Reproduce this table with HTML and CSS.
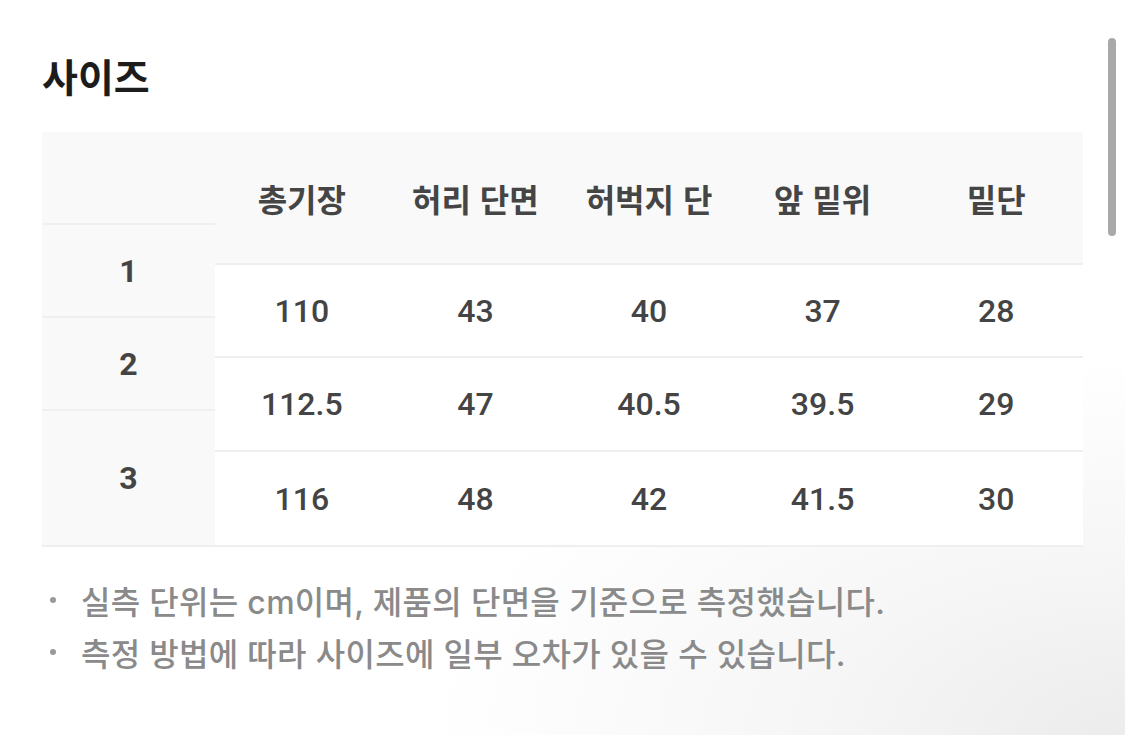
FILE: index.html
```html
<!DOCTYPE html>
<html lang="ko">
<head>
<meta charset="utf-8">
<title>사이즈</title>
<link rel="stylesheet" href="styles.css">
</head>
<body>
<div class="page">
  <h2 class="title">사이즈</h2>
  <div class="size-table">
    <div class="side">
      <div class="side-head"></div>
      <div class="side-cell">1</div>
      <div class="side-cell">2</div>
      <div class="side-cell side-last">3</div>
    </div>
    <div class="main">
      <div class="row row-head">
        <div class="cell">총기장</div>
        <div class="cell">허리 단면</div>
        <div class="cell">허벅지 단</div>
        <div class="cell">앞 밑위</div>
        <div class="cell">밑단</div>
      </div>
      <div class="row row-a">
        <div class="cell">110</div>
        <div class="cell">43</div>
        <div class="cell">40</div>
        <div class="cell">37</div>
        <div class="cell">28</div>
      </div>
      <div class="row row-b">
        <div class="cell">112.5</div>
        <div class="cell">47</div>
        <div class="cell">40.5</div>
        <div class="cell">39.5</div>
        <div class="cell">29</div>
      </div>
      <div class="row row-c">
        <div class="cell">116</div>
        <div class="cell">48</div>
        <div class="cell">42</div>
        <div class="cell">41.5</div>
        <div class="cell">30</div>
      </div>
    </div>
  </div>
  <ul class="notes">
    <li>실측 단위는 cm이며, 제품의 단면을 기준으로 측정했습니다.</li>
    <li>측정 방법에 따라 사이즈에 일부 오차가 있을 수 있습니다.</li>
  </ul>
</div>
<div class="scroll-thumb"></div>
</body>
</html>
```

FILE: styles.css
```css
* { box-sizing: border-box; }

html, body {
  margin: 0;
  padding: 0;
  height: 100%;
}

body {
  font-family: "Inter", "Noto Sans CJK KR", sans-serif;
  background: radial-gradient(ellipse 700px 380px at 100% 100%, #ececec 0%, #f6f6f6 45%, #ffffff 100%);
  color: #444;
  overflow: hidden;
}

.page {
  padding: 0 42px;
  width: 1125px;
}

.title {
  margin: 52px 0 34px;
  height: 46px;
  line-height: 46px;
  font-family: "Noto Sans CJK KR", sans-serif;
  font-size: 39px;
  font-weight: 700;
  color: #1c1c1c;
}

.size-table {
  display: flex;
  width: 1041px;
  border-bottom: 2px solid #efefef;
}

.side {
  width: 173px;
  flex: none;
  background: #f9f9f9;
  display: flex;
  flex-direction: column;
}

.side-head {
  height: 93px;
  border-bottom: 2px solid #efefef;
}

.side-cell {
  height: 93px;
  border-bottom: 2px solid #efefef;
  display: flex;
  align-items: center;
  justify-content: center;
  font-family: "Roboto", "Liberation Sans", sans-serif;
  font-size: 32px;
  font-weight: 700;
  color: #444;
}

.side-cell.side-last {
  height: 134px;
  border-bottom: none;
}

.main {
  flex: 1;
  display: flex;
  flex-direction: column;
  background: #fff;
}

.row {
  display: grid;
  grid-template-columns: repeat(5, 1fr);
  border-bottom: 2px solid #efefef;
}

.row .cell {
  display: flex;
  align-items: center;
  justify-content: center;
  font-family: "Roboto", "Liberation Sans", sans-serif;
  font-size: 32px;
  font-weight: 500;
  color: #444;
}

.row-head {
  height: 133px;
  background: #f9f9f9;
}

.row-head .cell {
  font-family: "Noto Sans CJK KR", sans-serif;
  font-size: 32px;
  font-weight: 700;
  color: #454545;
}

.row-a { height: 93px; }
.row-b { height: 94px; }
.row-c { height: 93px; border-bottom: none; }

.notes {
  list-style: none;
  margin: 27px 0 0;
  padding: 0;
}

.notes li {
  display: flex;
  align-items: center;
  height: 52px;
  font-size: 32px;
  font-weight: 500;
  letter-spacing: 0.3px;
  color: #8a8a8a;
}

.notes li::before {
  content: "";
  width: 6px;
  height: 6px;
  border-radius: 50%;
  background: #9a9a9a;
  margin: 0 25px 0 8px;
  flex: none;
}

.scroll-thumb {
  position: absolute;
  left: 1108px;
  top: 38px;
  width: 8px;
  height: 198px;
  border-radius: 4px;
  background: #a9a9a9;
}
```
